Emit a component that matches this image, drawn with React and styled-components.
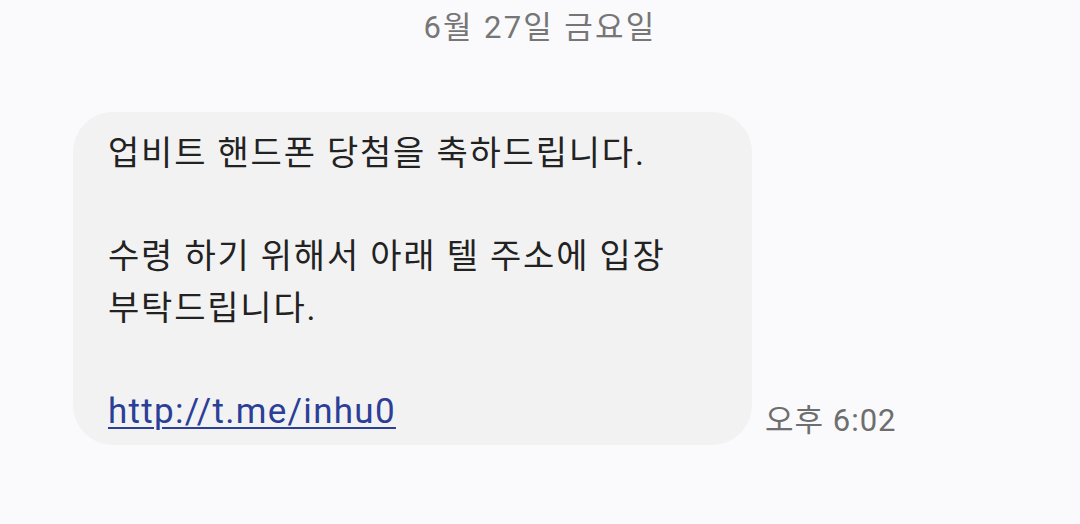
import React from "react";
import styled, { createGlobalStyle } from "styled-components";

const GlobalStyle = createGlobalStyle`
  html, body {
    margin: 0;
    padding: 0;
    background: #fafafc;
  }
  body {
    font-family: Roboto, "Noto Sans CJK KR", "Noto Sans", sans-serif;
  }
`;

const Screen = styled.div`
  width: 1080px;
  height: 524px;
  background: #fafafc;
  display: flex;
  flex-direction: column;
  overflow: hidden;
`;

const DateLabel = styled.div`
  text-align: center;
  font-size: 31px;
  line-height: 40px;
  color: #767676;
  padding-top: 8px;
  letter-spacing: 2.3px;
`;

const Row = styled.div`
  display: flex;
  align-items: flex-end;
  gap: 13px;
  padding: 64px 0 0 73px;
`;

const Bubble = styled.div`
  width: 679px;
  box-sizing: border-box;
  background: #f2f2f2;
  border-radius: 40px;
  padding: 16px 30px 8px 35px;
  color: #222222;
  font-size: 34px;
  line-height: 51.5px;
  letter-spacing: 1.8px;
`;

const Line = styled.div`
  min-height: 51.5px;
  white-space: nowrap;
`;

const Link = styled.a`
  color: #2b3e98;
  font-size: 35px;
  letter-spacing: 1.3px;
  text-decoration: underline;
  text-decoration-thickness: 2px;
  text-underline-offset: 4px;
`;

const Time = styled.div`
  font-size: 31px;
  line-height: 40px;
  color: #6e6e6e;
  padding-bottom: 4px;
  letter-spacing: 1px;
`;

export default function App() {
  return (
    <Screen>
      <GlobalStyle />
      <DateLabel>6월 27일 금요일</DateLabel>
      <Row>
        <Bubble>
          <Line>업비트 핸드폰 당첨을 축하드립니다.</Line>
          <Line />
          <Line>수령 하기 위해서 아래 텔 주소에 입장</Line>
          <Line>부탁드립니다.</Line>
          <Line />
          <Line>
            <Link href="#">http://t.me/inhu0</Link>
          </Line>
        </Bubble>
        <Time>오후 6:02</Time>
      </Row>
    </Screen>
  );
}
